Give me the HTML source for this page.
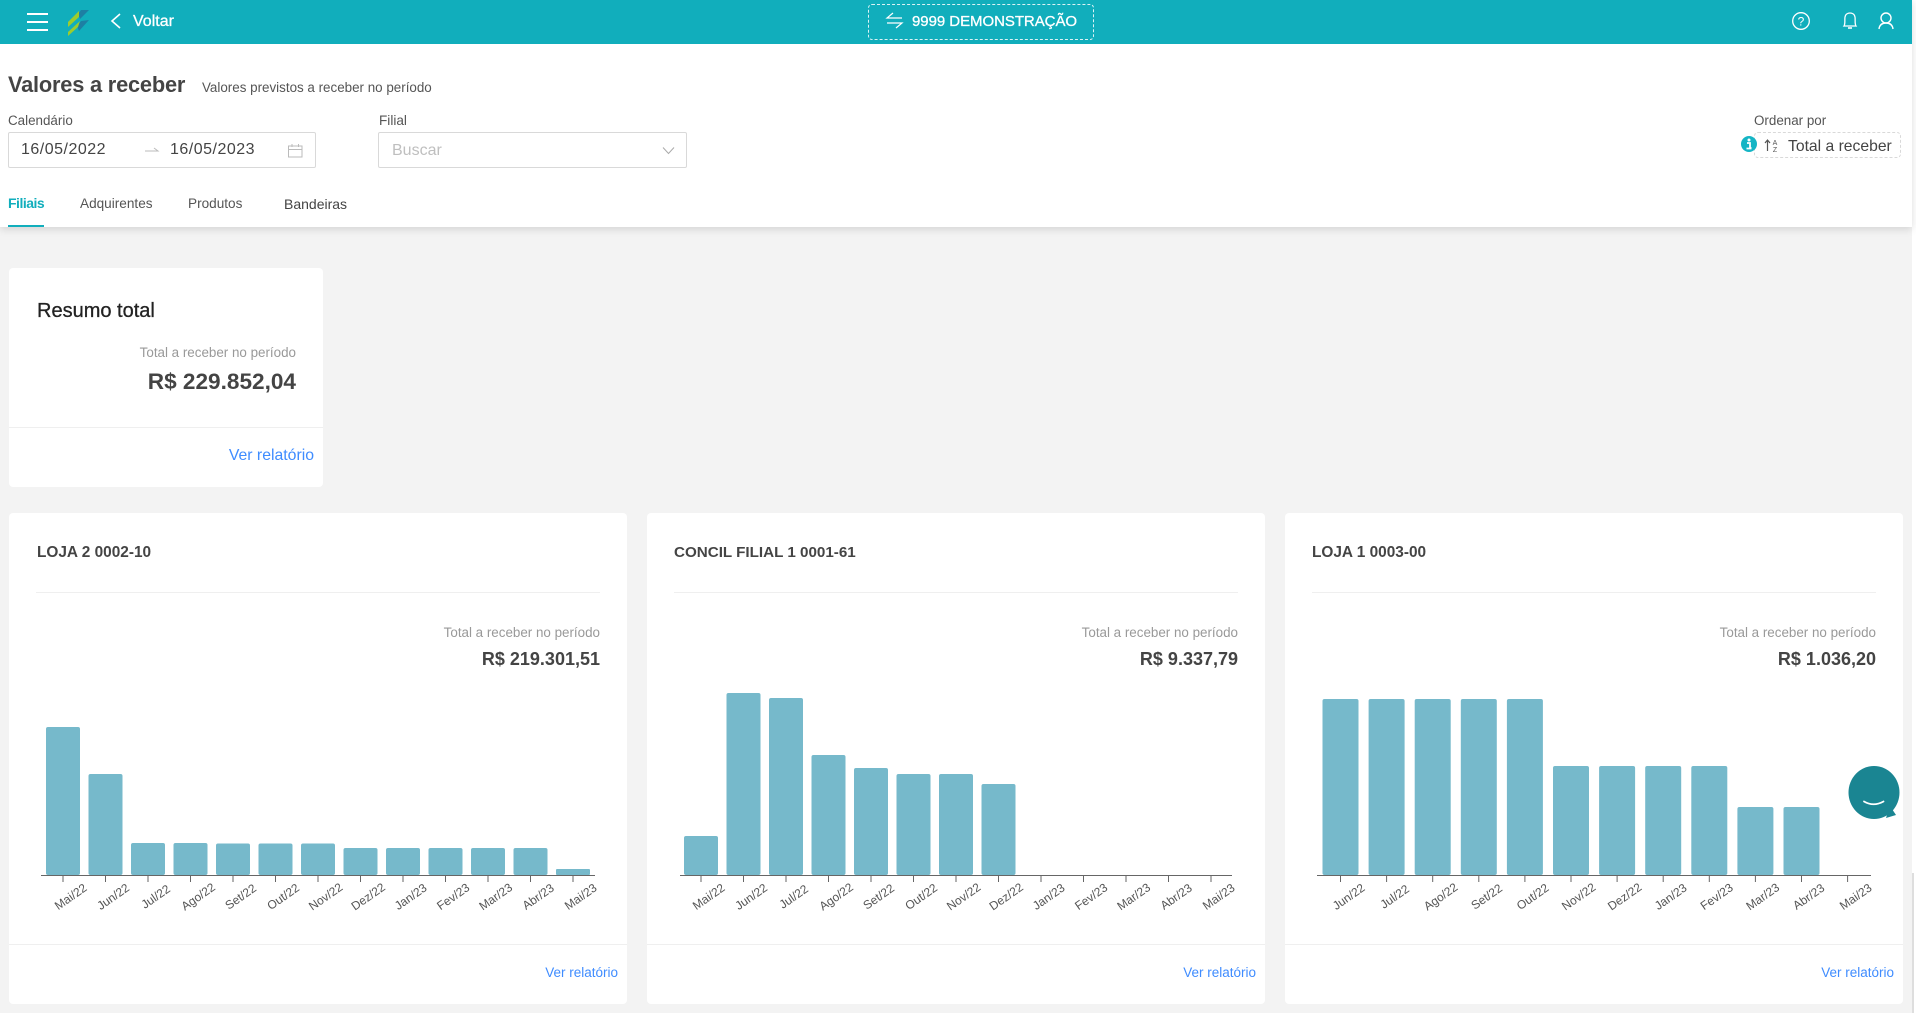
<!DOCTYPE html>
<html lang="pt-BR">
<head>
<meta charset="utf-8">
<title>Valores a receber</title>
<style>
html,body{margin:0;padding:0;width:1916px;height:1013px;overflow:hidden;background:#fff;}
body{font-family:"Liberation Sans",Arial,sans-serif;color:#444;position:relative;}
.a{position:absolute;white-space:nowrap;line-height:1;}
.m{-webkit-text-stroke:.3px currentColor;}
.box{position:absolute;box-sizing:border-box;}
.card{position:absolute;background:#fff;border-radius:4px;}
.hr{position:absolute;height:1px;background:#efefef;}
.lnk{color:#3f8cff;}
svg{position:absolute;left:0;top:0;}
svg text{font-family:"Liberation Sans",Arial,sans-serif;}
</style>
</head>
<body>
<div class="box" style="left:0;top:0;width:1912px;height:1013px;background:#f3f3f3"></div>
<div class="box" style="left:0;top:0;width:1912px;height:227px;background:#fff;box-shadow:0 2px 8px rgba(0,0,0,.14)"></div>
<div class="box" style="left:0;top:0;width:1912px;height:44px;background:#11aebc"></div>

<!-- header -->
<div class="a m" style="left:133px;top:14px;font-size:16px;color:#fff">Voltar</div>
<div class="box" style="left:868px;top:4px;width:226px;height:36px;border:1px dashed rgba(255,255,255,.85);border-radius:4px"></div>
<div class="a m" style="left:912px;top:14px;font-size:15px;color:#fff;letter-spacing:-.05px">9999 DEMONSTRAÇÃO</div>

<!-- title -->
<div class="a" style="left:8px;top:74px;font-size:21.8px;font-weight:bold;color:#444;letter-spacing:-.2px">Valores a receber</div>
<div class="a" style="left:202px;top:81px;font-size:13.4px;color:#555">Valores previstos a receber no período</div>
<div class="a" style="left:8px;top:114px;font-size:13.4px;color:#555">Calendário</div>
<div class="a" style="left:379px;top:114px;font-size:13.6px;color:#555">Filial</div>
<div class="box" style="left:8px;top:132px;width:308px;height:36px;border:1px solid #d9d9d9;border-radius:2px"></div>
<div class="a" style="left:21px;top:142px;font-size:16px;color:#444;letter-spacing:.5px">16/05/2022</div>
<div class="a" style="left:170px;top:142px;font-size:16px;color:#444;letter-spacing:.5px">16/05/2023</div>
<div class="box" style="left:378px;top:132px;width:309px;height:36px;border:1px solid #d9d9d9;border-radius:2px"></div>
<div class="a" style="left:392px;top:143px;font-size:16px;color:#bfbfbf">Buscar</div>

<div class="a" style="left:8px;top:196px;font-size:14px;font-weight:bold;color:#11aebc;letter-spacing:-.5px">Filiais</div>
<div class="box" style="left:8px;top:225px;width:36px;height:2px;background:#11aebc"></div>
<div class="a" style="left:80px;top:197px;font-size:13.6px;color:#555">Adquirentes</div>
<div class="a" style="left:188px;top:197px;font-size:13.6px;color:#555">Produtos</div>
<div class="a" style="left:284px;top:197px;font-size:14px;color:#444">Bandeiras</div>

<div class="a" style="left:1754px;top:114px;font-size:13.4px;color:#555">Ordenar por</div>
<div class="box" style="left:1754px;top:132px;width:147px;height:26px;border:1px dashed #d9d9d9;border-radius:4px"></div>
<div class="a" style="left:1788px;top:139px;font-size:15.7px;color:#444">Total a receber</div>

<!-- resumo -->
<div class="card" style="left:9px;top:268px;width:314px;height:219px"></div>
<div class="a m" style="left:37px;top:301px;font-size:20px;color:#222">Resumo total</div>
<div class="a" style="right:1620px;top:346px;font-size:13.4px;color:#999">Total a receber no período</div>
<div class="a" style="right:1620px;top:371px;font-size:22.6px;font-weight:bold;color:#444">R$ 229.852,04</div>
<div class="hr" style="left:9px;top:427px;width:314px"></div>
<div class="a lnk" style="right:1602px;top:448px;font-size:15.8px">Ver relatório</div>

<!-- cards -->
<div class="card" style="left:9px;top:513px;width:618px;height:491px"></div>
<div class="a" style="left:37px;top:545px;font-size:15.4px;font-weight:bold;color:#444">LOJA 2 0002-10</div>
<div class="hr" style="left:36px;top:592px;width:564px"></div>
<div class="a" style="right:1316px;top:626px;font-size:13.4px;color:#999">Total a receber no período</div>
<div class="a" style="right:1316px;top:650px;font-size:18px;font-weight:bold;color:#444">R$ 219.301,51</div>
<div class="hr" style="left:9px;top:944px;width:618px"></div>
<div class="a lnk" style="right:1298px;top:966px;font-size:13.5px">Ver relatório</div>

<div class="card" style="left:647px;top:513px;width:618px;height:491px"></div>
<div class="a" style="left:674px;top:545px;font-size:15.2px;font-weight:bold;color:#444">CONCIL FILIAL 1 0001-61</div>
<div class="hr" style="left:674px;top:592px;width:564px"></div>
<div class="a" style="right:678px;top:626px;font-size:13.4px;color:#999">Total a receber no período</div>
<div class="a" style="right:678px;top:650px;font-size:18px;font-weight:bold;color:#444">R$ 9.337,79</div>
<div class="hr" style="left:647px;top:944px;width:618px"></div>
<div class="a lnk" style="right:660px;top:966px;font-size:13.5px">Ver relatório</div>

<div class="card" style="left:1285px;top:513px;width:618px;height:491px"></div>
<div class="a" style="left:1312px;top:545px;font-size:15.4px;font-weight:bold;color:#444">LOJA 1 0003-00</div>
<div class="hr" style="left:1312px;top:592px;width:564px"></div>
<div class="a" style="right:40px;top:626px;font-size:13.4px;color:#999">Total a receber no período</div>
<div class="a" style="right:40px;top:650px;font-size:18px;font-weight:bold;color:#444">R$ 1.036,20</div>
<div class="hr" style="left:1285px;top:944px;width:618px"></div>
<div class="a lnk" style="right:22px;top:966px;font-size:13.5px">Ver relatório</div>

<div class="box" style="left:1912px;top:873px;width:2px;height:140px;background:#dedede"></div>

<svg width="1916" height="1013" viewBox="0 0 1916 1013">
  <!-- hamburger -->
  <g fill="#fff"><rect x="27" y="13" width="21" height="2"/><rect x="27" y="21" width="21" height="2"/><rect x="27" y="29" width="21" height="2"/></g>
  <!-- logo -->
  <polygon points="81,10 89,10 80,19 78,14" fill="#1d7fa3"/>
  <polygon points="81,21 89,20 79,31 77,26" fill="#1d7fa3"/>
  <polygon points="68,22 79,11 79,17 68,27" fill="#9ccc2e"/>
  <polygon points="68,32 80,21 78,27 68,36" fill="#9ccc2e"/>
  <!-- back chevron -->
  <path d="M120 14 L112 21 L120 28" fill="none" stroke="#fff" stroke-width="1.6"/>
  <!-- switch -->
  <path d="M893 13 L887 18 H902 M896 28 L902 23 H887" fill="none" stroke="#fff" stroke-width="1.2"/>
  <!-- help -->
  <circle cx="1801" cy="21" r="8.3" fill="none" stroke="#fff" stroke-width="1.3"/>
  <text x="1801" y="25.5" font-size="12" fill="#fff" text-anchor="middle">?</text>
  <!-- bell -->
  <path d="M1844 26 C1845.500 24 1844.500 19 1845 17 C1845.500 14 1848 13 1850 13 C1852 13 1854.500 14 1855 17 C1855.500 19 1854.500 24 1856 26 Z" fill="none" stroke="#fff" stroke-width="1.3"/>
  <path d="M1848 28 H1852" stroke="#fff" stroke-width="1.6"/>
  <!-- user -->
  <circle cx="1886" cy="18" r="5" fill="none" stroke="#fff" stroke-width="1.4"/>
  <path d="M1879 29 C1879.500 25 1882 23 1886 23 C1890 23 1892.500 25 1893 29" fill="none" stroke="#fff" stroke-width="1.4"/>
  <!-- date arrow -->
  <path d="M145 151 H158 L154 148" fill="none" stroke="#bbb" stroke-width="1"/>
  <!-- calendar -->
  <path d="M288.500 146 H302 V157 H288.500 Z M288.500 149.500 H302 M292 144 V147 M298.500 144 V147" fill="none" stroke="#bbb" stroke-width="1"/>
  <!-- select chevron -->
  <path d="M663 147.500 L668.500 153.500 L674 147.500" fill="none" stroke="#aaa" stroke-width="1"/>
  <!-- info -->
  <circle cx="1749" cy="144" r="8" fill="#15b5c5"/>
  <circle cx="1749" cy="140" r="1.500" fill="#fff"/>
  <path d="M1747 143 H1750 V148 H1751.500 M1746.500 148.500 H1751.500" fill="none" stroke="#fff" stroke-width="1.800"/>
  <!-- sort -->
  <path d="M1767.500 151 V140 M1765 143 L1767.500 140 L1770 143" fill="none" stroke="#555" stroke-width="1.200"/>
  <text x="1775" y="145" font-size="7" fill="#555" text-anchor="middle">A</text>
  <text x="1775" y="152" font-size="7" fill="#555" text-anchor="middle">Z</text>

  <!-- chart 1 -->
  <g fill="#76b9cb">
    <rect x="46" y="727" width="34" height="148" rx="2"/><rect x="88.500" y="774" width="34" height="101" rx="2"/><rect x="131" y="843" width="34" height="32" rx="2"/><rect x="173.500" y="843" width="34" height="32" rx="2"/><rect x="216" y="843.500" width="34" height="31.500" rx="2"/><rect x="258.500" y="843.500" width="34" height="31.500" rx="2"/><rect x="301" y="843.500" width="34" height="31.500" rx="2"/><rect x="343.500" y="848" width="34" height="27" rx="2"/><rect x="386" y="848" width="34" height="27" rx="2"/><rect x="428.500" y="848" width="34" height="27" rx="2"/><rect x="471" y="848" width="34" height="27" rx="2"/><rect x="513.500" y="848" width="34" height="27" rx="2"/><rect x="556" y="869" width="34" height="6" rx="1"/>
  </g>
  <path d="M41 875.500 H595 M63 875 V882 M105.500 875 V882 M148 875 V882 M190.500 875 V882 M233 875 V882 M275.500 875 V882 M318 875 V882 M360.500 875 V882 M403 875 V882 M445.500 875 V882 M488 875 V882 M530.500 875 V882 M573 875 V882" stroke="#666" stroke-width="1" fill="none"/>
  <g font-size="12" fill="#555" text-anchor="middle">
    <text transform="translate(73,900) rotate(-35)">Mai/22</text><text transform="translate(115.500,900) rotate(-35)">Jun/22</text><text transform="translate(158,900) rotate(-35)">Jul/22</text><text transform="translate(200.500,900) rotate(-35)">Ago/22</text><text transform="translate(243,900) rotate(-35)">Set/22</text><text transform="translate(285.500,900) rotate(-35)">Out/22</text><text transform="translate(328,900) rotate(-35)">Nov/22</text><text transform="translate(370.500,900) rotate(-35)">Dez/22</text><text transform="translate(413,900) rotate(-35)">Jan/23</text><text transform="translate(455.500,900) rotate(-35)">Fev/23</text><text transform="translate(498,900) rotate(-35)">Mar/23</text><text transform="translate(540.500,900) rotate(-35)">Abr/23</text><text transform="translate(583,900) rotate(-35)">Mai/23</text>
  </g>

  <!-- chart 2 -->
  <g fill="#76b9cb">
    <rect x="684" y="836" width="34" height="39" rx="2"/><rect x="726.500" y="693" width="34" height="182" rx="2"/><rect x="769" y="698" width="34" height="177" rx="2"/><rect x="811.500" y="755" width="34" height="120" rx="2"/><rect x="854" y="768" width="34" height="107" rx="2"/><rect x="896.500" y="774" width="34" height="101" rx="2"/><rect x="939" y="774" width="34" height="101" rx="2"/><rect x="981.500" y="784" width="34" height="91" rx="2"/>
  </g>
  <path d="M680 875.500 H1232 M701 875 V882 M743.500 875 V882 M786 875 V882 M828.500 875 V882 M871 875 V882 M913.500 875 V882 M956 875 V882 M998.500 875 V882 M1041 875 V882 M1083.500 875 V882 M1126 875 V882 M1168.500 875 V882 M1211 875 V882" stroke="#666" stroke-width="1" fill="none"/>
  <g font-size="12" fill="#555" text-anchor="middle">
    <text transform="translate(711,900) rotate(-35)">Mai/22</text><text transform="translate(753.500,900) rotate(-35)">Jun/22</text><text transform="translate(796,900) rotate(-35)">Jul/22</text><text transform="translate(838.500,900) rotate(-35)">Ago/22</text><text transform="translate(881,900) rotate(-35)">Set/22</text><text transform="translate(923.500,900) rotate(-35)">Out/22</text><text transform="translate(966,900) rotate(-35)">Nov/22</text><text transform="translate(1008.500,900) rotate(-35)">Dez/22</text><text transform="translate(1051,900) rotate(-35)">Jan/23</text><text transform="translate(1093.500,900) rotate(-35)">Fev/23</text><text transform="translate(1136,900) rotate(-35)">Mar/23</text><text transform="translate(1178.500,900) rotate(-35)">Abr/23</text><text transform="translate(1221,900) rotate(-35)">Mai/23</text>
  </g>

  <!-- chart 3 -->
  <g fill="#76b9cb">
    <rect x="1322.500" y="699" width="36" height="176" rx="2"/><rect x="1368.600" y="699" width="36" height="176" rx="2"/><rect x="1414.700" y="699" width="36" height="176" rx="2"/><rect x="1460.800" y="699" width="36" height="176" rx="2"/><rect x="1506.900" y="699" width="36" height="176" rx="2"/><rect x="1553" y="766" width="36" height="109" rx="2"/><rect x="1599.100" y="766" width="36" height="109" rx="2"/><rect x="1645.200" y="766" width="36" height="109" rx="2"/><rect x="1691.300" y="766" width="36" height="109" rx="2"/><rect x="1737.400" y="807" width="36" height="68" rx="2"/><rect x="1783.500" y="807" width="36" height="68" rx="2"/>
  </g>
  <path d="M1317 875.500 H1871 M1340.500 875 V882 M1386.600 875 V882 M1432.700 875 V882 M1478.800 875 V882 M1524.900 875 V882 M1571 875 V882 M1617.100 875 V882 M1663.200 875 V882 M1709.300 875 V882 M1755.400 875 V882 M1801.500 875 V882 M1847.600 875 V882" stroke="#666" stroke-width="1" fill="none"/>
  <g font-size="12" fill="#555" text-anchor="middle">
    <text transform="translate(1351,900) rotate(-35)">Jun/22</text><text transform="translate(1397,900) rotate(-35)">Jul/22</text><text transform="translate(1443,900) rotate(-35)">Ago/22</text><text transform="translate(1489,900) rotate(-35)">Set/22</text><text transform="translate(1535,900) rotate(-35)">Out/22</text><text transform="translate(1581,900) rotate(-35)">Nov/22</text><text transform="translate(1627,900) rotate(-35)">Dez/22</text><text transform="translate(1673,900) rotate(-35)">Jan/23</text><text transform="translate(1719,900) rotate(-35)">Fev/23</text><text transform="translate(1765,900) rotate(-35)">Mar/23</text><text transform="translate(1811,900) rotate(-35)">Abr/23</text><text transform="translate(1858,900) rotate(-35)">Mai/23</text>
  </g>

  <!-- chat bubble -->
  <ellipse cx="1874" cy="792.500" rx="25.500" ry="26.500" fill="#1a8592"/>
  <polygon points="1890,806 1896,815 1886,818" fill="#1a8592"/>
  <path d="M1864 801.500 Q1873.500 807 1883.500 801.500" fill="none" stroke="#fff" stroke-width="1.800" stroke-linecap="round"/>
</svg>
</body>
</html>
